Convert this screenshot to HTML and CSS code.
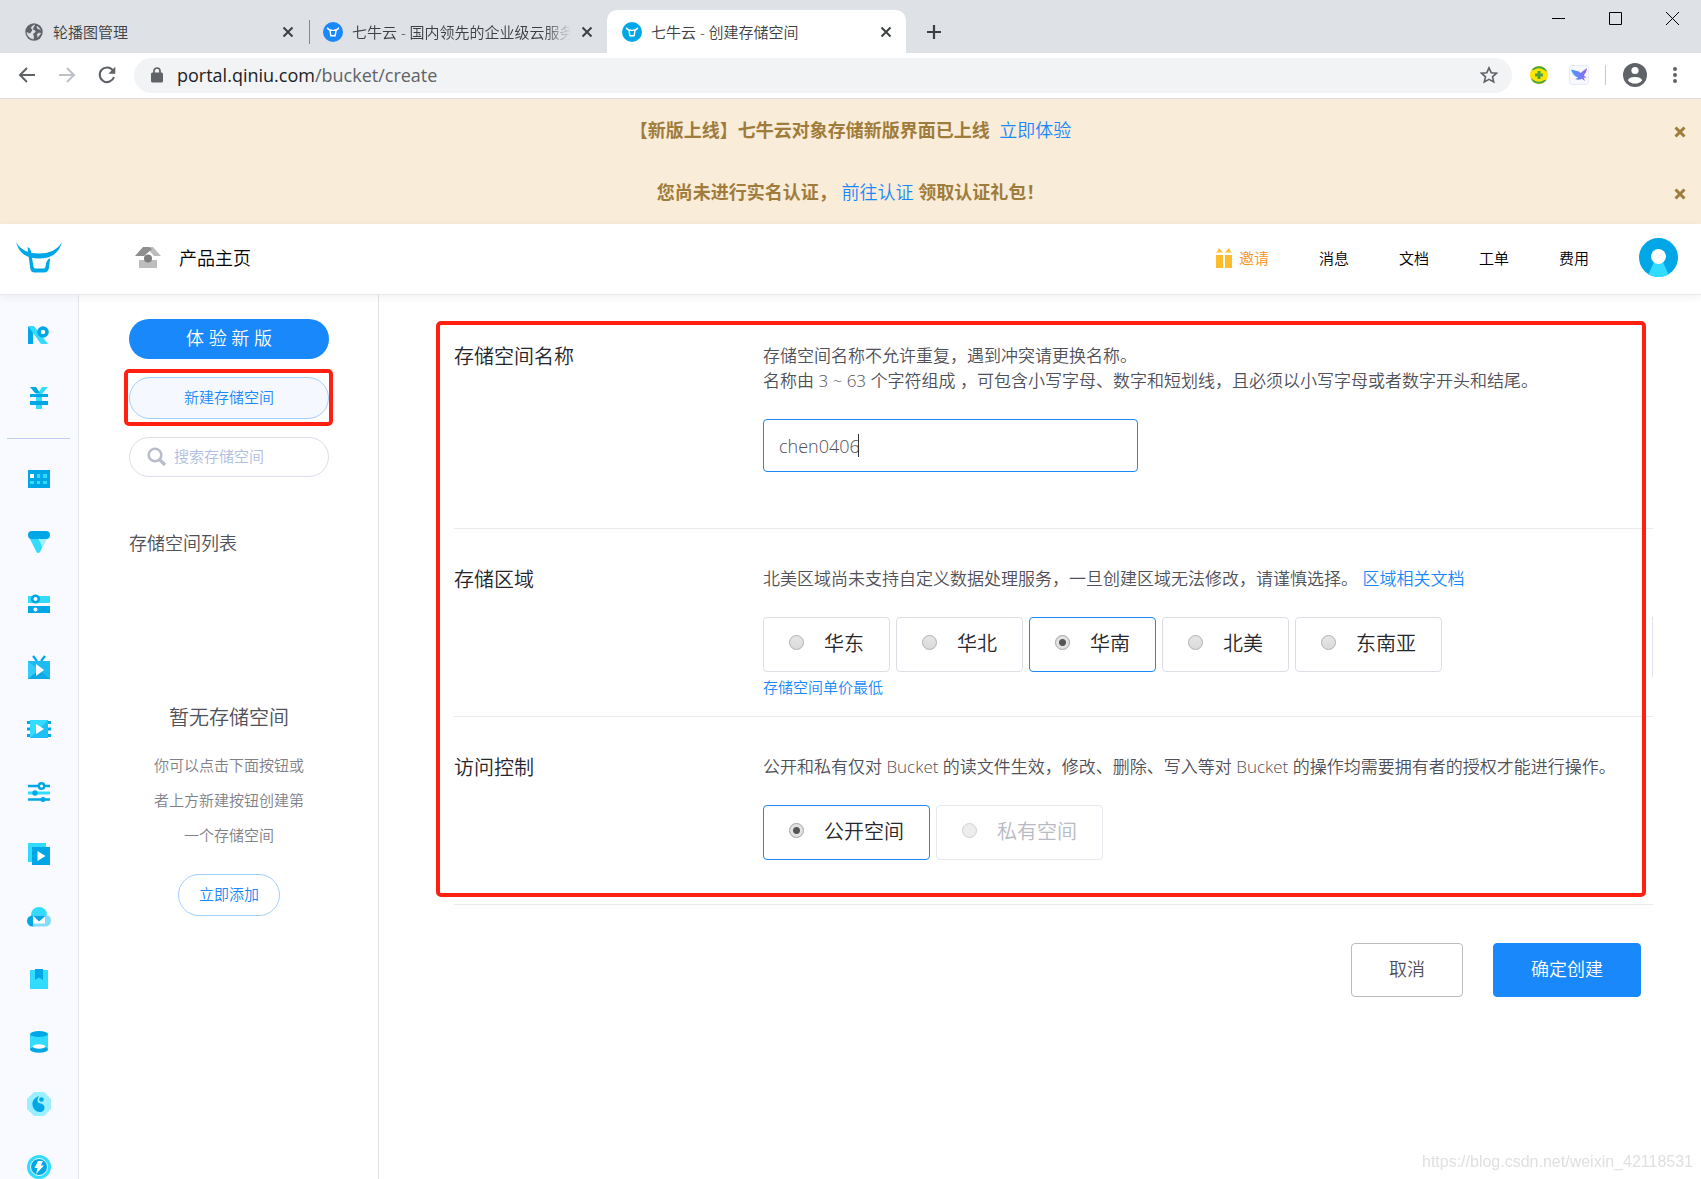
FILE: index.html
```html
<!DOCTYPE html>
<html lang="zh-CN">
<head>
<meta charset="utf-8">
<title>七牛云 - 创建存储空间</title>
<link rel="stylesheet" href="styles.css">
</head>
<body>
<svg class="defs" aria-hidden="true">
  <defs>
    <symbol id="close" viewBox="0 0 14 14"><path d="M2.5 2.5l9 9M11.500 2.500l-9 9" fill="none" stroke="#3c4043" stroke-width="2"/></symbol>
    <symbol id="bull" viewBox="0 0 20 20"><path d="M4.200 5.600C6 9.300 14 9.300 15.800 5.600M7 8.300l.9 5.500h4.200l.9-5.200" fill="none" stroke="#fff" stroke-width="1.400" stroke-linejoin="round"/></symbol>
    <symbol id="times" viewBox="0 0 12 12"><path d="M1.500 1.500l9 9M10.500 1.500l-9 9" stroke="#a07c3c" stroke-width="3"/></symbol>
  </defs>
</svg>

<div class="window">
  <div class="tabstrip">
    <div class="tab">
      <svg class="favicon" viewBox="0 0 20 20"><circle cx="10" cy="10" r="8.700" fill="#5f6368"/><path d="M11 2.800C8 4.500 6.500 5 7.800 7c1.500 1.700 3.200.5 3.400 2.500.1 1.500-3 1.300-2.200 3.300.6 1.300 1.200 2.500.2 4.300C5 16 3.500 13.500 2.900 10.500c1.500.6 2.600 1.500 3.800.6M13.500 4c-.8 1.500-.4 2.700 1.200 3 .8.300 1.700.2 2 .8M17 11.500c-1.500-.5-3-.6-3.600.6-.6 1.500.8 1.600.3 3.400" fill="#dee1e6" stroke="#dee1e6" stroke-width=".600"/></svg>
      <span class="tab-title">轮播图管理</span>
      <button class="icon-btn" aria-label="关闭标签页"><svg width="14" height="14"><use href="#close"/></svg></button>
    </div>
    <div class="tab tab-ruled">
      <svg class="favicon" viewBox="0 0 20 20"><circle cx="10" cy="10" r="10" fill="#1888fb"/><use href="#bull"/></svg>
      <span class="tab-title tab-fade">七牛云 - 国内领先的企业级云服务</span>
      <button class="icon-btn" aria-label="关闭标签页"><svg width="14" height="14"><use href="#close"/></svg></button>
    </div>
    <div class="tab tab-active">
      <svg class="favicon" viewBox="0 0 20 20"><circle cx="10" cy="10" r="10" fill="#00a7e7"/><use href="#bull"/></svg>
      <span class="tab-title">七牛云 - 创建存储空间</span>
      <button class="icon-btn" aria-label="关闭标签页"><svg width="14" height="14"><use href="#close"/></svg></button>
    </div>
    <button class="icon-btn new-tab" aria-label="新标签页"><svg width="16" height="16" viewBox="0 0 16 16"><path d="M8 1v14M1 8h14" stroke="#3c4043" stroke-width="2.200"/></svg></button>
    <div class="win-controls">
      <button class="icon-btn" aria-label="最小化"><svg width="13" height="13"><path d="M0 6.500h13" stroke="#000"/></svg></button>
      <button class="icon-btn" aria-label="最大化"><svg width="13" height="13"><path d="M.5.5h12v12H.5z" fill="none" stroke="#000"/></svg></button>
      <button class="icon-btn" aria-label="关闭"><svg width="13" height="13"><path d="M0 0l13 13M13 0L0 13" stroke="#000"/></svg></button>
    </div>
  </div>

  <div class="toolbar">
    <div class="nav-buttons">
      <button class="icon-btn" aria-label="后退"><svg width="18" height="18" viewBox="0 0 18 18"><path d="M17 9H2M9 2L2 9l7 7" fill="none" stroke="#5f6368" stroke-width="2"/></svg></button>
      <button class="icon-btn" aria-label="前进"><svg width="18" height="18" viewBox="0 0 18 18"><path d="M1 9h15M9 2l7 7-7 7" fill="none" stroke="#bdc1c6" stroke-width="2"/></svg></button>
      <button class="icon-btn" aria-label="刷新"><svg width="18" height="18" viewBox="0 0 18 18"><path d="M15 4.500A7.300 7.300 0 1 0 16 11" fill="none" stroke="#5f6368" stroke-width="2.100"/><path d="M17.300.8v7h-7z" fill="#5f6368"/></svg></button>
    </div>
    <div class="omnibox">
      <svg width="12" height="16" viewBox="0 0 12 16"><rect y="5.500" width="12" height="10" rx="1.500" fill="#5f6368"/><path d="M3 6V4a3 3 0 0 1 6 0v2" fill="none" stroke="#5f6368" stroke-width="1.700"/></svg>
      <span class="url"><span class="host">portal.qiniu.com</span>/bucket/create</span>
      <button class="icon-btn" aria-label="收藏"><svg width="18" height="18" viewBox="0 0 18 18"><path d="M9 1.800l2.200 4.900 5.300.5-4 3.600 1.200 5.200L9 13.300 4.300 16l1.200-5.200-4-3.600 5.300-.5z" fill="none" stroke="#5f6368" stroke-width="1.600"/></svg></button>
    </div>
    <div class="extensions">
      <svg width="18" height="18" viewBox="0 0 18 18"><circle cx="9" cy="9" r="9" fill="#fde500"/><path d="M1.500 4.200A9 9 0 0 1 17.300 5.800C14 4 12 2.200 9 2.200 6 2.200 4 4.500 1.500 4.200zM16.500 13.800A9 9 0 0 1 .7 12.200c3.300 1.800 5.300 3.600 8.300 3.600s5-2.300 7.500-2z" fill="#4da340"/><path d="M9 5v8M5 9h8" stroke="#4da340" stroke-width="3"/></svg>
      <svg class="ext-bird" width="20" height="20" viewBox="0 0 20 20"><defs><linearGradient id="wing" x1="0" x2="1"><stop stop-color="#3fa0ff"/><stop offset="1" stop-color="#9a62f5"/></linearGradient></defs><rect x=".5" y=".5" width="19" height="19" rx="2" fill="#f7f7fe" stroke="#e9eafa"/><path d="M2 4.500c3 .8 5 1.300 8 2L11.500 8 18 3c-.3 3.500-1.500 5.500-3.200 7.200L17.500 13l-2.700-.4 1 3.400-3-2.300c-1.800 1.300-4.300 1.500-6.800.3 1.600-.5 2.400-.9 3-1.500C6 11.500 3 8.500 2 4.500z" fill="url(#wing)"/></svg>
      <span class="ext-rule"></span>
      <svg width="24" height="24" viewBox="0 0 24 24"><circle cx="12" cy="12" r="12" fill="#5f6368"/><circle cx="12" cy="7.500" r="3.600" fill="#fff"/><path d="M4.800 17.200C6 14.600 10 14 12 14s6 .6 7.200 3.200C17.500 19.500 15 20.600 12 20.600s-5.500-1.100-7.200-3.400z" fill="#fff"/></svg>
      <button class="icon-btn menu-btn" aria-label="菜单"><svg width="4" height="16"><g fill="#5f6368"><circle cx="2" cy="2" r="2"/><circle cx="2" cy="8" r="2"/><circle cx="2" cy="14" r="2"/></g></svg></button>
    </div>
  </div>

  <div class="notices">
    <div class="notice">
      <p><strong>【新版上线】七牛云对象存储新版界面已上线</strong>&nbsp; <a href="#">立即体验</a></p>
      <button class="icon-btn" aria-label="关闭"><svg width="12" height="12"><use href="#times"/></svg></button>
    </div>
    <div class="notice">
      <p><strong>您尚未进行实名认证，</strong> <a href="#">前往认证</a> <strong>领取认证礼包！</strong></p>
      <button class="icon-btn" aria-label="关闭"><svg width="12" height="12"><use href="#times"/></svg></button>
    </div>
  </div>

  <header class="header">
    <svg class="logo" width="46" height="31" viewBox="0 0 46 31"><path d="M0 0C5 8.500 13 11.500 23 11.500S41 8.500 46 0C42.500 12 35 16.500 23 16.500S3.500 12 0 0z" fill="#00a7e7"/><path d="M11.500 5c3 1.500 3.800 4 4 8l1.700 10c.3 2.500.8 3.500 2.300 3.500h8c1.500 0 2-1 2.300-3.500.3-3 1.500-5.500 4.400-7l-1.400 10.500C32 29 31 30.500 28 30.500H19c-3 0-4.300-1.500-4.800-4.500l-1.700-13z" fill="#00a7e7"/></svg>
    <a class="home-link" href="#">
      <svg width="26" height="21" viewBox="0 0 26 21"><path d="M4 13h18v8H4z" fill="#bdbdbd"/><path d="M11 0h7l8 9h-7z" fill="#bdbdbd"/><path d="M8 0h6l3 2-8 7H0z" fill="#8e8e8e"/><circle cx="13" cy="11.500" r="4" fill="#7d7d7d"/></svg>
      <span>产品主页</span>
    </a>
    <nav class="top-nav">
      <a class="invite" href="#"><svg width="16" height="20" viewBox="0 0 16 20"><g fill="#fdbc2c"><path d="M0 7h7v13H0zM9 7h7v13H9zM1 4l2-4 3.500 4zM15 4l-2-4-3.500 4z"/><path d="M0 4h7v1H0zM9 4h7v1H9z" opacity=".500"/></g></svg>邀请</a>
      <a href="#">消息</a>
      <a href="#">文档</a>
      <a href="#">工单</a>
      <a href="#">费用</a>
      <svg class="avatar" width="39" height="39" viewBox="0 0 39 39"><circle cx="19.500" cy="19.500" r="19.500" fill="#00a7e7"/><path d="M16 22L9.500 36.200a19.500 19.500 0 0 0 20 0L23 22z" fill="#32dcff"/><circle cx="19.500" cy="18.500" r="7.500" fill="#fff"/></svg>
    </nav>
  </header>

  <div class="workspace">
    <nav class="rail" aria-label="产品">
      <div class="rail-group rail-top">
        <a href="#" aria-label="资源"><svg width="22" height="18" viewBox="0 0 22 18"><path d="M0 1h5v17H0z" fill="#00a7e7"/><path d="M0 0h6l14 18h-7z" fill="#32dcff"/><circle cx="15" cy="6" r="4" fill="#f8faff" stroke="#00a7e7" stroke-width="3.600"/></svg></a>
        <a href="#" aria-label="财务"><svg width="20" height="22" viewBox="0 0 20 22"><path d="M7 6h6v16H7zM13 0h6l-7 8H8z" fill="#32dcff"/><path d="M1 0h6l4 6H6zM1 7h18v3H1zM1 14h18v4H1z" fill="#00a7e7"/></svg></a>
      </div>
      <hr>
      <div class="rail-group rail-products">
        <a href="#" aria-label="云主机"><svg width="22" height="18" viewBox="0 0 22 18"><path d="M0 0h22v18H0z" fill="#00a7e7"/><path d="M2 4h4v4H2z" fill="#fff"/><path d="M9 4h3v4H9zM15 4h4v4h-4zM2 11h4v3H2zM9 11h3v3H9zM15 11h4v3h-4z" fill="#32dcff"/></svg></a>
        <a href="#" aria-label="CDN"><svg width="22" height="22" viewBox="0 0 22 22"><path d="M20 6l-8 15-3-6 4-9z" fill="#a0efff"/><path d="M1 6h9l4 10-2 5c-1 1.500-3 1-3.500 0z" fill="#32dcff"/><rect width="22" height="8" rx="4" fill="#00a7e7"/></svg></a>
        <a href="#" aria-label="对象存储"><svg width="22" height="20" viewBox="0 0 22 20"><path d="M0 2h22v7H0z" fill="#32dcff"/><path d="M0 12h22v7H0z" fill="#00a7e7"/><circle cx="7.500" cy="5" r="3.300" fill="#fff" stroke="#00a7e7" stroke-width="2.600"/><circle cx="7.500" cy="15.500" r="2" fill="#fff"/></svg></a>
        <a href="#" aria-label="直播云"><svg width="22" height="24" viewBox="0 0 22 24"><path d="M5 1l4 5M17 1l-4 5" stroke="#00a7e7" stroke-width="2.200"/><path d="M0 6h22v18H0z" fill="#1cbcf1"/><path d="M0 6l11 9L0 24z" fill="#32cdfa"/><path d="M0 24l11-9 11 9z" fill="#0ba9e6"/><path d="M8 9l8 6-8 6z" fill="#fff"/></svg></a>
        <a href="#" aria-label="视频处理"><svg width="24" height="18" viewBox="0 0 24 18"><path d="M0 1h24v3H0zM0 7.500h24v3H0zM0 14h24v3H0z" fill="#00a7e7"/><path d="M3 0h18v18H3z" fill="#1cc0f4"/><path d="M3 0h18L3 18z" fill="#32dcff"/><path d="M9 4l8 5-8 5z" fill="#fff"/></svg></a>
        <a href="#" aria-label="数据处理"><svg width="22" height="20" viewBox="0 0 22 20"><path d="M0 4h22M0 17.500h22" stroke="#00a7e7" stroke-width="2.600"/><path d="M0 11h22" stroke="#32dcff" stroke-width="3"/><circle cx="13.500" cy="4" r="2.700" fill="#fff" stroke="#00a7e7" stroke-width="2.400"/><circle cx="7" cy="11" r="2.700" fill="#00a7e7"/><circle cx="15" cy="17.500" r="2.500" fill="#00a7e7"/></svg></a>
        <a href="#" aria-label="点播"><svg width="22" height="22" viewBox="0 0 22 22"><path d="M0 0h18v19H0z" fill="#32dcff"/><path d="M4 4h18v18H4z" fill="#00a7e7"/><path d="M9.500 8l8 5-8 5z" fill="#fff"/></svg></a>
        <a href="#" aria-label="云短信"><svg width="24" height="20" viewBox="0 0 24 20"><circle cx="12" cy="8" r="8" fill="#32dcff"/><circle cx="5.500" cy="14" r="5.500" fill="#00a7e7"/><path d="M6 14h6l6-6c4-.5 6 2.500 6 5.500S22 19.500 18 19.500H6z" fill="#83ddfa"/><path d="M6 8.500h12v8H6z" fill="#fff"/><path d="M6 8.500h13l-7 6z" fill="#00a7e7"/></svg></a>
        <a href="#" aria-label="镜像"><svg width="20" height="20" viewBox="0 0 20 20"><path d="M1 1h18v19H1z" fill="#32dcff"/><path d="M6 0h8v11l-4-2.500L6 11z" fill="#00a7e7"/></svg></a>
        <a href="#" aria-label="数据库"><svg width="18" height="22" viewBox="0 0 18 22"><path d="M0 3h18v15H0z" fill="#32dcff"/><ellipse cx="9" cy="18.500" rx="9" ry="3.200" fill="#00a7e7"/><ellipse cx="9" cy="3" rx="9" ry="3" fill="#00a7e7"/><ellipse cx="9" cy="15.500" rx="6.500" ry="2.200" fill="#fff"/></svg></a>
        <a href="#" aria-label="日志"><svg width="24" height="24" viewBox="0 0 24 24"><path d="M7 0h10l7 7v10l-7 7H7l-7-7V7z" fill="#9af0ff"/><path d="M12 4c-5 2-7 5-6.500 9 .5 4 3.500 7 7 7s5-2 5-4.500c0-3-3-4-5.500-4.500-2-.5-2-4 0-7z" fill="#00a7e7"/><circle cx="14.500" cy="7.500" r="2.300" fill="#00a7e7"/></svg></a>
        <a href="#" aria-label="函数计算"><svg width="24" height="24" viewBox="0 0 24 24"><circle cx="12" cy="12" r="12" fill="#32dcff"/><circle cx="12" cy="12" r="8.500" fill="#00a7e7" stroke="#e8fbff"/><path d="M11 6h5l-2 4.500h3L9 19l1.500-6H7.500z" fill="#fff"/></svg></a>
      </div>
    </nav>

    <aside class="buckets">
      <button class="pill pill-solid">体 验 新 版</button>
      <button class="pill pill-tint">新建存储空间</button>
      <label class="search">
        <svg width="20" height="20" viewBox="0 0 20 20"><circle cx="8" cy="8" r="6.300" fill="none" stroke="#b9bdcb" stroke-width="2.600"/><path d="M12.500 12.500l5.500 5.500" stroke="#b9bdcb" stroke-width="3.200"/></svg>
        <input type="search" placeholder="搜索存储空间" aria-label="搜索存储空间">
      </label>
      <h2 class="list-title">存储空间列表</h2>
      <div class="empty">
        <h3>暂无存储空间</h3>
        <p>你可以点击下面按钮或者上方新建按钮创建第一个存储空间</p>
        <button class="pill">立即添加</button>
      </div>
    </aside>

    <main class="main">
      <form>
        <div class="marked">
          <section class="field field-name">
            <label class="field-label" for="bucket">存储空间名称</label>
            <div class="field-body">
              <p>存储空间名称不允许重复，遇到冲突请更换名称。<br>名称由 3 ~ 63 个字符组成 ，可包含小写字母、数字和短划线，且必须以小写字母或者数字开头和结尾。</p>
              <div class="text-box">
                <input id="bucket" type="text" value="chen0406">
                <span class="caret"></span>
              </div>
            </div>
          </section>
          <section class="field">
            <h2 class="field-label">存储区域</h2>
            <div class="field-body">
              <p>北美区域尚未支持自定义数据处理服务，一旦创建区域无法修改，请谨慎选择。 <a href="#">区域相关文档</a></p>
              <div class="options options-ruled" role="radiogroup" aria-label="存储区域">
                <label class="option"><input type="radio" name="region">华东</label>
                <label class="option"><input type="radio" name="region">华北</label>
                <label class="option"><input type="radio" name="region" checked>华南</label>
                <label class="option"><input type="radio" name="region">北美</label>
                <label class="option"><input type="radio" name="region">东南亚</label>
              </div>
              <a class="price" href="#">存储空间单价最低</a>
            </div>
          </section>
          <section class="field">
            <h2 class="field-label">访问控制</h2>
            <div class="field-body">
              <p>公开和私有仅对 Bucket 的读文件生效，修改、删除、写入等对 Bucket 的操作均需要拥有者的授权才能进行操作。</p>
              <div class="options" role="radiogroup" aria-label="访问控制">
                <label class="option"><input type="radio" name="access" checked>公开空间</label>
                <label class="option"><input type="radio" name="access" disabled>私有空间</label>
              </div>
            </div>
          </section>
        </div>
        <div class="actions">
          <button type="button" class="btn">取消</button>
          <button type="submit" class="btn btn-primary">确定创建</button>
        </div>
      </form>
    </main>
  </div>
  <div class="watermark">https://blog.csdn.net/weixin_42118531</div>
</div>
</body>
</html>
```

FILE: styles.css
```css
* { box-sizing: border-box; }

body {
  margin: 0;
  background: #fff;
  color: #505058;
  font-family: "Open Sans", "Noto Sans CJK SC", sans-serif;
  font-size: 18px;
  font-weight: 350;
  line-height: 26px;
}

h2, h3, p { margin: 0; font-weight: 350; }
a { color: #1888fb; text-decoration: none; }
button, input { font: inherit; color: inherit; }
button { padding: 0; cursor: pointer; }
svg { display: block; flex: none; }
.defs { position: absolute; width: 0; height: 0; }

.icon-btn {
  display: flex;
  align-items: center;
  justify-content: center;
  border: 0;
  background: none;
}

.window {
  display: flex;
  flex-direction: column;
  height: 100vh;
  overflow: hidden;
}

/* Browser frame */
.tabstrip {
  display: flex;
  flex: none;
  height: 53px;
  padding: 10px 0 0 9px;
  background: #dee1e6;
}
.tab {
  display: flex;
  align-items: center;
  gap: 9px;
  width: 299px;
  padding: 0 13px 0 15px;
  color: #3c4043;
  font-size: 15px;
}
.tab-ruled { background: linear-gradient(#80868b, #80868b) 1px 50% / 1px 24px no-repeat; }
.tab-active { background: #fff; border-radius: 10px 10px 0 0; }
.favicon { width: 20px; height: 20px; }
.tab-title { flex: 1; overflow: hidden; white-space: nowrap; }
.tab-fade {
  -webkit-mask-image: linear-gradient(90deg, #000 88%, transparent);
  mask-image: linear-gradient(90deg, #000 88%, transparent);
}
.new-tab { width: 56px; }
.win-controls { display: flex; margin: -10px 0 0 auto; height: 37px; }
.win-controls .icon-btn { width: 57px; }

.toolbar {
  display: flex;
  align-items: center;
  flex: none;
  height: 46px;
  padding-bottom: 1px;
  border-bottom: 1px solid #dadce0;
  background: #fff;
}
.nav-buttons { display: flex; gap: 22px; width: 134px; padding-left: 18px; }
.omnibox {
  display: flex;
  align-items: center;
  flex: 1;
  gap: 14px;
  height: 35px;
  padding: 0 14px 1px 17px;
  border-radius: 18px;
  background: #f1f3f4;
}
.url { flex: 1; color: #5f6368; font-weight: 400; }
.host { color: #202124; }
.extensions { display: flex; align-items: center; gap: 17px; padding: 0 24px 0 18px; }
.ext-bird { margin: 0 -2px 0 4px; }
.ext-rule { width: 1px; height: 20px; margin-left: 1px; background: #c6c9cd; }
.menu-btn { padding-left: 9px; }

/* Notices */
.notices { flex: none; padding-bottom: 1px; background: #f9ecd8; }
.notice {
  display: flex;
  align-items: center;
  height: 62px;
  padding: 0 15px 0 27px;
}
.notice p { flex: 1; text-align: center; }
.notice strong { color: #a07c3c; font-weight: 700; }
.notice .icon-btn { padding-top: 3px; }

/* Header */
.header {
  display: flex;
  align-items: center;
  flex: none;
  position: relative;
  height: 71px;
  padding: 0 23px 3px 16px;
  border-bottom: 1px solid #e9e9ec;
  background: #fff;
  box-shadow: 0 2px 8px rgba(0, 0, 0, .06);
}
.home-link {
  display: flex;
  align-items: center;
  gap: 18px;
  margin-left: 73px;
  color: #000;
}
.top-nav {
  display: flex;
  align-items: center;
  gap: 50px;
  margin-left: auto;
  font-size: 15px;
}
.top-nav a { color: #000; }
.top-nav .invite { display: flex; align-items: center; gap: 7px; color: #f8931a; }

/* Product rail */
.workspace { display: flex; flex: 1; min-height: 0; }
.rail {
  flex: none;
  width: 79px;
  padding: 9px 0 0;
  border-right: 1px solid #e4e5e9;
  background: #f8faff;
}
.rail-group { display: grid; grid-auto-rows: 1fr; }
.rail-group a { display: flex; align-items: center; justify-content: center; }
.rail-top { height: 125px; }
.rail-products { height: 750px; }
.rail hr { width: 63px; height: 1px; margin: 9px 8px 9px 7px; border: 0; background: #c3cdf3; }

/* Bucket list */
.buckets {
  display: flex;
  flex-direction: column;
  flex: none;
  width: 300px;
  padding: 24px 49px 0 50px;
  border-right: 1px solid #e1e3e6;
}
.pill {
  height: 42px;
  padding: 0 20px 2px;
  border: 1px solid #a3cffd;
  border-radius: 21px;
  background: #fff;
  color: #1888fb;
  font-size: 15px;
}
.pill-solid { height: 40px; border: 0; background: #1888fb; color: #fff; font-size: 18px; }
.pill-tint { position: relative; margin: 18px 0; background: #f5f9ff; }
.pill-tint::after {
  content: "";
  position: absolute;
  inset: -9px -5px -8px -6px;
  border: 4px solid #ff2012;
  border-radius: 5px;
}
.search {
  display: flex;
  align-items: center;
  gap: 7px;
  height: 40px;
  padding: 0 17px;
  border: 1px solid #dcdee8;
  border-radius: 20px;
}
.search input {
  width: 100%;
  min-width: 0;
  padding: 0 0 2px;
  border: 0;
  outline: 0;
  background: none;
  font-size: 15px;
}
.search input::placeholder { color: #aebddf; opacity: 1; }
.list-title { margin-top: 53px; font-size: 18px; }
.empty { margin-top: 149px; padding: 0 25px; text-align: center; }
.empty h3 { font-size: 20px; }
.empty p { margin: 17px 0 21px; color: #808087; font-size: 15px; line-height: 35px; }

/* Create form */
.main { flex: 1; min-width: 0; padding: 9px 48px 0 75px; }
.marked { position: relative; }
.marked::after {
  content: "";
  position: absolute;
  inset: 17px 7px 8px -18px;
  border: 4px solid #ff2012;
  border-radius: 5px;
  pointer-events: none;
}
.field {
  display: flex;
  height: 188px;
  padding-top: 37px;
  border-bottom: 1px solid #ebebed;
}
.field-name { height: 225px; padding-top: 39px; }
.field-label {
  flex: none;
  width: 309px;
  padding-top: 1px;
  color: #26262b;
  font-size: 20px;
  font-weight: 350;
}
.field-body { flex: 1; min-width: 0; }
.field-body p { font-size: 17px; line-height: 25px; white-space: nowrap; }
.text-box { position: relative; width: 375px; margin-top: 26px; }
.text-box input {
  display: block;
  width: 100%;
  height: 53px;
  padding: 0 15px;
  border: 1px solid #1888fb;
  border-radius: 4px;
  outline: 0;
  background: #fff;
}
.caret { position: absolute; top: 15px; left: 95px; width: 1px; height: 23px; background: #333; }
.options { display: flex; align-items: flex-start; gap: 6px; margin-top: 26px; color: #26262b; font-size: 20px; }
.options-ruled { height: 60px; border-right: 1px solid #dfe3f2; }
.option {
  display: flex;
  align-items: center;
  gap: 20px;
  height: 55px;
  padding: 0 25px 2px;
  border: 1px solid #dcdee6;
  border-radius: 4px;
}
.option:has(:checked) { border-color: #1888fb; }
.option:has(:disabled) { border-color: #e8e9ee; color: #b8bac5; }
.option input {
  appearance: none;
  width: 15px;
  height: 15px;
  margin: 0 0 3px;
  border: 1px solid #b0b0b0;
  border-radius: 50%;
  background: linear-gradient(#e6e6e6, #dadada);
}
.option input:checked {
  border-color: #a2a2a2;
  background: radial-gradient(circle, #555 3px, #e2e2e2 4px);
}
.option input:disabled { border-color: #d2d2d2; background: #ededed; }
.price { display: block; line-height: 20px; font-size: 15px; }

.actions { display: flex; justify-content: flex-end; gap: 30px; padding: 38px 12px 0 0; }
.btn {
  height: 54px;
  padding: 0 37px 2px;
  border: 1px solid #bcbcc0;
  border-radius: 4px;
  background: #fff;
}
.btn-primary { border-color: #1888fb; background: #1888fb; color: #fff; }

.watermark {
  position: fixed;
  right: 8px;
  bottom: 4px;
  color: #e0e0e0;
  font-family: "Liberation Sans", sans-serif;
  font-size: 16px;
  font-weight: 400;
}
```
